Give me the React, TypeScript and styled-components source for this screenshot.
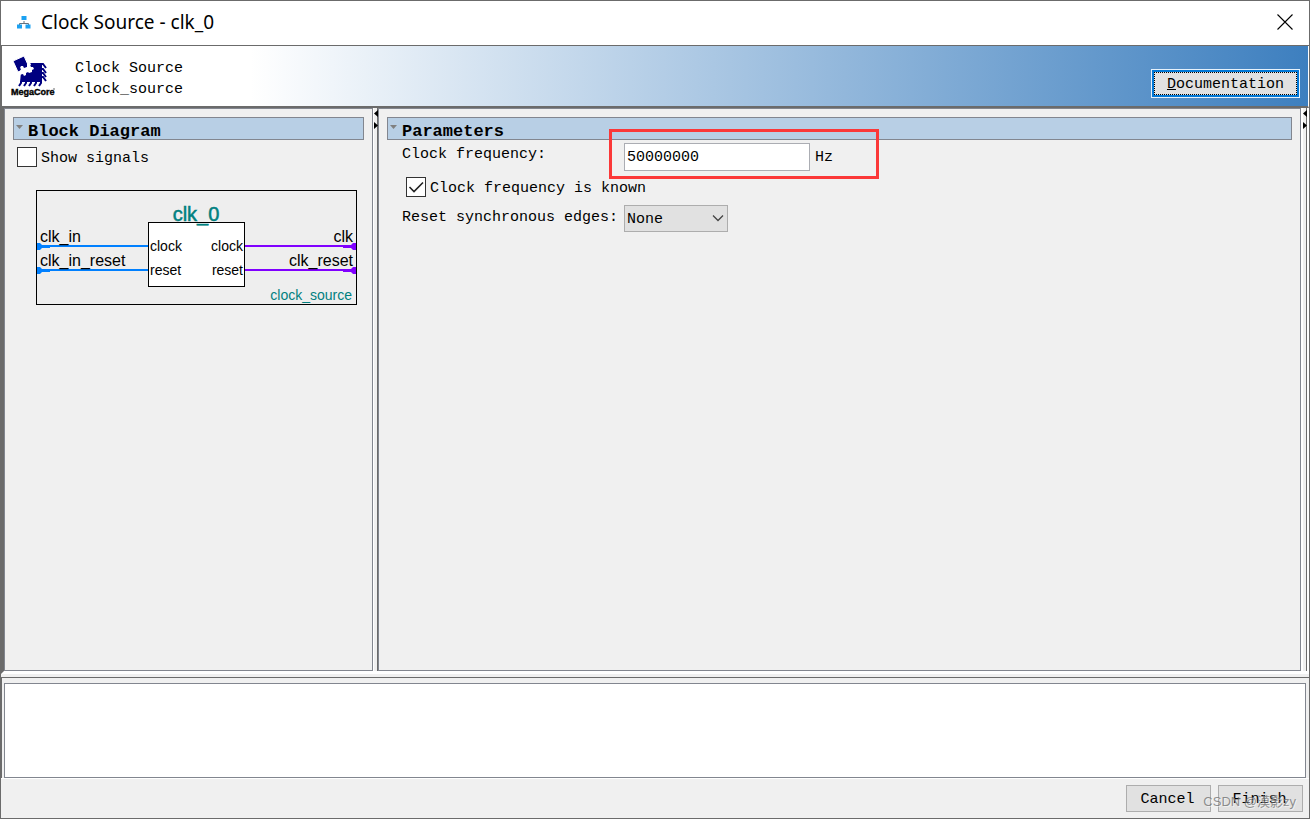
import React, { useState } from "react";
import styled, { createGlobalStyle } from "styled-components";

const mono = '"Liberation Mono", "Courier New", monospace';
const edge = "#6b6b6b";
const line = "#82868f";

const GlobalStyle = createGlobalStyle`
  *, *::before, *::after { box-sizing: border-box; }
  body { margin: 0; background: #f0f0f0; color: #000; font: 15px/21px ${mono}; }
`;

const Window = styled.div`
  display: flex;
  flex-direction: column;
  min-height: 100vh;
  border: 1px solid ${edge};
  background: #f0f0f0;
`;

const TitleBar = styled.header`
  display: flex;
  align-items: center;
  height: 45px;
  padding: 0 16px 2px;
  border-bottom: 1px solid ${edge};
  background: #fff;
`;

const WindowTitle = styled.h1`
  flex: 1;
  margin: 0 0 0 10px;
  font: 400 19px/24px "Noto Sans", sans-serif;
`;

const CloseButton = styled.button`
  display: flex;
  padding: 0;
  border: 0;
  background: none;
`;

const Banner = styled.div`
  display: flex;
  align-items: center;
  height: 62px;
  padding: 0 9px 0 8px;
  border-left: 1px solid ${edge};
  border-right: 1px solid #fff;
  border-bottom: 2px solid ${edge};
  background: linear-gradient(90deg, #fff 0%, #fff 19%, #3d7fbf 100%);
`;

const BannerText = styled.p`
  flex: 1;
  margin: 6px 0 0 19px;
`;

const DocButton = styled.button`
  align-self: flex-end;
  width: 147px;
  height: 27px;
  margin-bottom: 9px;
  padding: 0;
  border: 2px solid #0078d7;
  background: #e1e1e1;
  box-shadow: 0 0 0 1px #e6f2fc;
  font: 15px/24px ${mono};

  span {
    display: block;
    height: 23px;
    border: 1px dotted #000;
  }
`;

const Main = styled.main`
  display: flex;
  flex: 1;
  border-left: 3px solid ${edge};
  border-bottom: 3px solid #fff;
`;

const Panel = styled.section<{ $side?: boolean }>`
  flex: ${(p) => (p.$side ? "0 0 369px" : "1 1 0")};
  min-width: 0;
  padding: 8px;
  border: 1px solid ${line};
  background: #f0f0f0;
`;

const Splitter = styled.div`
  display: flex;
  width: 5px;
  padding-top: 2px;
  border-left: 1px solid #fff;
  border-right: 1px solid ${edge};
`;

const EndStrip = styled.div`
  display: flex;
  width: 8px;
  padding-top: 2px;
  border-left: 2px solid #fff;
  border-right: 2px solid #fff;
  box-shadow: inset -1px 0 0 ${edge};
`;

const SectionHead = styled.h2`
  display: flex;
  gap: 5px;
  height: 23px;
  margin: 0;
  padding: 7px 2px 0;
  border: 1px solid ${line};
  background: #b8cfe5;
  font: 700 17px/13px ${mono};
`;

const CheckLabel = styled.label<{ $inset?: boolean }>`
  display: flex;
  align-items: center;
  gap: 4px;
  height: 22px;
  margin: ${(p) => (p.$inset ? "7px 0 7px 4px" : "6px 0 0 4px")};
`;

const CheckText = styled.span`
  padding-top: 2px;
`;

const BoxWrap = styled.span`
  position: relative;
  display: flex;
`;

const Box = styled.input`
  appearance: none;
  width: 20px;
  height: 20px;
  margin: 0;
  border: 1px solid #333;
  background: #fff;
`;

const Mark = styled.svg`
  position: absolute;
  inset: 0;
  pointer-events: none;
`;

const DiagramFrame = styled.div`
  margin: 22px 7px 0 23px;
`;

const Form = styled.form`
  padding: 2px 0 0 15px;
`;

const Row = styled.div`
  display: grid;
  grid-template-columns: 222px auto 1fr;
  height: 27px;

  label { margin-top: 2px; }
`;

const FreqGroup = styled.div`
  position: relative;
  display: flex;
  align-items: center;
  gap: 5px;
  height: 29px;
`;

const FreqInput = styled.input`
  width: 186px;
  height: 28px;
  padding: 2px 2px 0;
  border: 1px solid #abadb3;
  background: #fff;
  font: 15px/21px ${mono};
`;

const Unit = styled.span`
  padding-top: 2px;
`;

const Highlight = styled.span`
  position: absolute;
  top: -13px;
  left: -15px;
  width: 270px;
  height: 50px;
  border: 3px solid #fb3838;
  pointer-events: none;
`;

const SelectWrap = styled.span`
  position: relative;
  display: block;
  height: 27px;

  svg {
    position: absolute;
    top: 9px;
    right: 4px;
    pointer-events: none;
  }
`;

const Select = styled.select`
  appearance: none;
  width: 104px;
  height: 27px;
  padding: 2px 2px 0;
  border: 1px solid #adadad;
  border-radius: 0;
  background: #e1e1e1;
  color: #000;
  font: 15px/21px ${mono};
`;

const MessageFrame = styled.div`
  margin-top: 3px;
  padding: 5px 3px 0 2px;
  border-top: 1px solid ${edge};
  border-left: 1px solid ${edge};
`;

const Messages = styled.textarea`
  display: block;
  width: 100%;
  height: 95px;
  padding: 4px;
  border: 1px solid ${line};
  border-radius: 0;
  background: #fff;
  resize: none;
`;

const Footer = styled.footer`
  position: relative;
  display: flex;
  justify-content: flex-end;
  gap: 7px;
  height: 40px;
  padding: 6px 6px 0;
  border-top: 1px solid #fff;
`;

const FooterButton = styled.button`
  width: 85px;
  height: 27px;
  padding: 2px 2px 0 0;
  border: 1px solid #adadad;
  background: #e1e1e1;
  font: 15px/21px ${mono};
`;

const Watermark = styled.span`
  position: absolute;
  right: 13px;
  bottom: 7px;
  color: rgba(110, 110, 110, 0.75);
  font: 13px/18px "Liberation Sans", "Noto Sans CJK SC", sans-serif;
  text-shadow: 1px 1px 0 rgba(255, 255, 255, 0.5);
  pointer-events: none;
`;

const Caret = () => (
  <svg width="7" height="5" viewBox="0 0 7 5" aria-hidden="true">
    <path d="M0 0h7L3.500 4z" fill="#808080" />
  </svg>
);

const Arrows = styled.svg`
  flex: none;
`;

const SplitArrows = () => (
  <Arrows width="4" height="20" viewBox="0 0 4 20" aria-hidden="true">
    <path d="M4 0v7L0 3.500zM0 12v7l4-3.500z" />
  </Arrows>
);

const AppIcon = () => (
  <svg width="14" height="13" viewBox="0 0 14 13" aria-hidden="true">
    <path d="M7 5v3M2.500 9V7.500h9V9" fill="none" stroke="#66727e" />
    <path d="M4.500 0h5v4h-5zM0 8.500h5v4H0zM8.500 8.500h5v4h-5z" fill="#1ba1f2" />
  </svg>
);

const MegaCoreLogo = () => (
  <svg width="46" height="42" viewBox="0 0 46 42" role="img" aria-label="MegaCore">
    <path d="M12 8h20v19H10z" fill="#000080" />
    <path
      d="M31 9h2l3 4M31 14h2l3 4M31 18h2l3 4M31 22h2l3 4M11 26v2l-2 3M16 26v2l-2 3M21 26v2l-2 3M26 26v2l-2 3M31 26v2l-2 3"
      fill="none"
      stroke="#000080"
      strokeWidth="2"
    />
    <path d="M3 6l11-5 5 11-11 5z" fill="#000080" stroke="#fff" strokeWidth="1" />
    <path
      d="M8 17l2-1 1-2-1-1 1-2 2 0 1 2 3-1 0-3 3-1 0 2 1 2 2 0 1 2-2 1 0 2-3 1-1-1-2 1 0 2-2 1-1-2-4 1z"
      fill="#fff"
    />
    <path d="M17 8l3-1 1 3-2 1z" fill="#fff" />
    <text x="1" y="40" fontFamily="Liberation Sans, sans-serif" fontSize="9" fontWeight="700" stroke="#000" strokeWidth="0.400">
      MegaCore
    </text>
    <circle cx="44" cy="34" r="0.800" fill="#555" />
  </svg>
);

const ports = [
  { y: 56, input: "clk_in", output: "clk", inner: "clock" },
  { y: 80, input: "clk_in_reset", output: "clk_reset", inner: "reset" },
];

const BlockDiagram = () => (
  <svg
    width="321"
    height="115"
    viewBox="0 0 321 115"
    fontFamily="Liberation Sans, Arial, sans-serif"
    fontSize="16"
    role="img"
    aria-label="Block diagram of clk_0"
  >
    <rect x="0.500" y="0.500" width="320" height="114" fill="#eee" stroke="#000" />
    <rect x="112.500" y="32.500" width="96" height="64" fill="#fff" stroke="#000" />
    <text x="160" y="31" fontSize="20" fill="#008080" stroke="#008080" strokeWidth="0.500" textAnchor="middle">
      clk_0
    </text>
    {ports.map((p) => (
      <g key={p.inner}>
        <path d={`M1 ${p.y}H112`} stroke="#0080ff" strokeWidth="2" />
        <path d={`M1 ${p.y - 3}h3l2 2h8v3H6l-2 2H1z`} fill="#0080ff" />
        <path d={`M209 ${p.y}H320`} stroke="#8000ff" strokeWidth="2" />
        <path d={`M320 ${p.y - 3}h-3l-2 2h-8v3h8l2 2h3z`} fill="#8000ff" />
        <text x="4" y={p.y - 4}>{p.input}</text>
        <text x="317" y={p.y - 4} textAnchor="end">{p.output}</text>
        <text x="114" y={p.y + 5} fontSize="14">{p.inner}</text>
        <text x="207" y={p.y + 5} fontSize="14" textAnchor="end">{p.inner}</text>
      </g>
    ))}
    <text x="316" y="110" fontSize="14" fill="#008080" textAnchor="end">clock_source</text>
  </svg>
);

type CheckProps = { text: string; initial: boolean; inset?: boolean };

const CheckField = ({ text, initial, inset }: CheckProps) => {
  const [checked, setChecked] = useState(initial);
  return (
    <CheckLabel $inset={inset}>
      <BoxWrap>
        <Box type="checkbox" checked={checked} onChange={(e) => setChecked(e.target.checked)} />
        {checked && (
          <Mark width="20" height="20" viewBox="0 0 20 20">
            <path d="M3.500 10l4.500 4.500L17 5.500" fill="none" stroke="#222" strokeWidth="1.600" />
          </Mark>
        )}
      </BoxWrap>
      <CheckText>{text}</CheckText>
    </CheckLabel>
  );
};

export default function App() {
  return (
    <>
      <GlobalStyle />
      <Window>
        <TitleBar>
          <AppIcon />
          <WindowTitle>Clock Source - clk_0</WindowTitle>
          <CloseButton type="button" aria-label="Close">
            <svg width="16" height="16" viewBox="0 0 16 16">
              <path d="M0.500 0.500l15 15M15.500 0.500l-15 15" stroke="#000" strokeWidth="1.100" />
            </svg>
          </CloseButton>
        </TitleBar>
        <Banner>
          <MegaCoreLogo />
          <BannerText>
            Clock Source
            <br />
            clock_source
          </BannerText>
          <DocButton type="button">
            <span><u>D</u>ocumentation</span>
          </DocButton>
        </Banner>
        <Main>
          <Panel $side>
            <SectionHead><Caret />Block Diagram</SectionHead>
            <CheckField text="Show signals" initial={false} />
            <DiagramFrame><BlockDiagram /></DiagramFrame>
          </Panel>
          <Splitter><SplitArrows /></Splitter>
          <Panel>
            <SectionHead><Caret />Parameters</SectionHead>
            <Form>
              <Row>
                <label htmlFor="freq">Clock frequency:</label>
                <FreqGroup>
                  <FreqInput id="freq" defaultValue="50000000" />
                  <Unit>Hz</Unit>
                  <Highlight />
                </FreqGroup>
              </Row>
              <CheckField text="Clock frequency is known" initial inset />
              <Row>
                <label htmlFor="edges">Reset synchronous edges:</label>
                <SelectWrap>
                  <Select id="edges" defaultValue="None">
                    <option>None</option>
                    <option>Both</option>
                    <option>Deassert</option>
                  </Select>
                  <svg width="12" height="8" viewBox="0 0 12 8">
                    <path d="M1 1.500l5 5 5-5" fill="none" stroke="#444" strokeWidth="1.300" />
                  </svg>
                </SelectWrap>
              </Row>
            </Form>
          </Panel>
          <EndStrip><SplitArrows /></EndStrip>
        </Main>
        <MessageFrame>
          <Messages aria-label="Messages" readOnly />
        </MessageFrame>
        <Footer>
          <FooterButton type="button">Cancel</FooterButton>
          <FooterButton type="button">Finish</FooterButton>
          <Watermark>CSDN @漠影zy</Watermark>
        </Footer>
      </Window>
    </>
  );
}
